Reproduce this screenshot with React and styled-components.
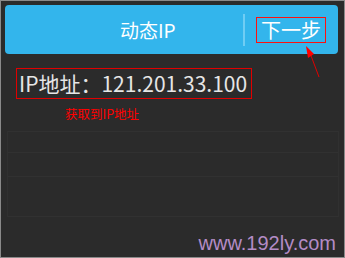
import React from "react";
import styled, { createGlobalStyle } from "styled-components";

const GlobalStyle = createGlobalStyle`
  html, body { margin: 0; padding: 0; background: #2b2b2b; }
  body { width: 345px; height: 258px; overflow: hidden; }
`;

const Screen = styled.div`
  position: relative;
  box-sizing: border-box;
  width: 345px;
  height: 258px;
  border: 1px solid #8a8a8a;
  background: #2b2b2b;
  padding: 4px 6px 0 4px;
  display: flex;
  flex-direction: column;
  font-family: "Noto Sans CJK SC", "Noto Sans", sans-serif;
`;

const Header = styled.div`
  height: 49px;
  background: #33b5ec;
  border-radius: 4px;
  display: flex;
  align-items: center;
  flex-shrink: 0;
`;

const Title = styled.div`
  flex: 1;
  padding-left: 115px;
  color: #ffffff;
  font-size: 19px;
  line-height: 1;
`;

const Divider = styled.div`
  width: 2px;
  height: 32px;
  background: #6fcdf4;
  margin-right: 11px;
`;

const NextButton = styled.div`
  box-sizing: border-box;
  width: 70px;
  height: 26px;
  border: 1px solid #ff1010;
  color: #ffffff;
  font-size: 20px;
  line-height: 24px;
  padding-left: 4px;
  margin-right: 12px;
`;

const IpBox = styled.div`
  box-sizing: border-box;
  margin: 14px 0 0 11px;
  width: 236px;
  height: 31px;
  border: 1px solid #e00000;
  color: #e6e6e6;
  font-size: 21px;
  line-height: 29px;
  padding-left: 2px;
  white-space: nowrap;
`;

const Caption = styled.div`
  margin: 8px 0 0 60px;
  color: #ff0000;
  font-size: 12.5px;
  line-height: 14px;
`;

const Rows = styled.div`
  margin: 10px 0 0 2px;
  width: 330px;
  border-left: 1px solid #303030;
  border-right: 1px solid #303030;
`;

const Row = styled.div`
  height: ${(p) => p.$h}px;
  border-top: 1px solid #313131;
  box-sizing: border-box;
`;

const Watermark = styled.div`
  position: absolute;
  right: 8px;
  bottom: 3px;
  color: #b48cc6;
  font-family: "Liberation Sans", Arial, sans-serif;
  font-size: 20px;
  line-height: 22px;
`;

const ArrowSvg = styled.svg`
  position: absolute;
  left: 0;
  top: 0;
  pointer-events: none;
`;

export default function App() {
  return (
    <>
      <GlobalStyle />
      <Screen>
        <Header>
          <Title>动态IP</Title>
          <Divider />
          <NextButton>下一步</NextButton>
        </Header>
        <IpBox>IP地址：121.201.33.100</IpBox>
        <Caption>获取到IP地址</Caption>
        <Rows>
          <Row $h={21} />
          <Row $h={24} />
          <Row $h={40} />
          <Row $h={1} />
        </Rows>
        <Watermark>www.192ly.com</Watermark>
        <ArrowSvg width="345" height="258" viewBox="0 0 345 258">
          <line x1="318" y1="76" x2="309" y2="52" stroke="#e00000" strokeWidth="1" />
          <polygon points="305,45 313,53 307,57" fill="#ff0000" />
        </ArrowSvg>
      </Screen>
    </>
  );
}
